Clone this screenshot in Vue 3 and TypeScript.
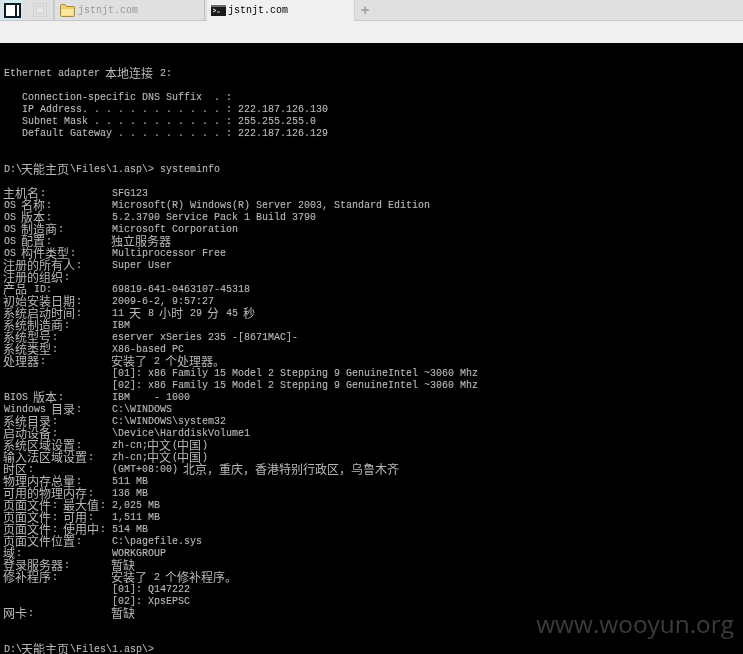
<script setup lang="ts">
interface Run { text: string; cjk: boolean }
interface Line { label: string; value: string }

const rows: Line[] = [
  { label: '', value: '' },
  { label: '', value: '' },
  { label: 'Ethernet adapter 本地连接 2:', value: '' },
  { label: '', value: '' },
  { label: '   Connection-specific DNS Suffix  . :', value: '' },
  { label: '   IP Address. . . . . . . . . . . . : 222.187.126.130', value: '' },
  { label: '   Subnet Mask . . . . . . . . . . . : 255.255.255.0', value: '' },
  { label: '   Default Gateway . . . . . . . . . : 222.187.126.129', value: '' },
  { label: '', value: '' },
  { label: '', value: '' },
  { label: 'D:\\天能主页\\Files\\1.asp\\> systeminfo', value: '' },
  { label: '', value: '' },
  { label: '主机名:', value: 'SFG123' },
  { label: 'OS 名称:', value: 'Microsoft(R) Windows(R) Server 2003, Standard Edition' },
  { label: 'OS 版本:', value: '5.2.3790 Service Pack 1 Build 3790' },
  { label: 'OS 制造商:', value: 'Microsoft Corporation' },
  { label: 'OS 配置:', value: '独立服务器' },
  { label: 'OS 构件类型:', value: 'Multiprocessor Free' },
  { label: '注册的所有人:', value: 'Super User' },
  { label: '注册的组织:', value: '' },
  { label: '产品 ID:', value: '69819-641-0463107-45318' },
  { label: '初始安装日期:', value: '2009-6-2, 9:57:27' },
  { label: '系统启动时间:', value: '11 天 8 小时 29 分 45 秒' },
  { label: '系统制造商:', value: 'IBM' },
  { label: '系统型号:', value: 'eserver xSeries 235 -[8671MAC]-' },
  { label: '系统类型:', value: 'X86-based PC' },
  { label: '处理器:', value: '安装了 2 个处理器。' },
  { label: '', value: '[01]: x86 Family 15 Model 2 Stepping 9 GenuineIntel ~3060 Mhz' },
  { label: '', value: '[02]: x86 Family 15 Model 2 Stepping 9 GenuineIntel ~3060 Mhz' },
  { label: 'BIOS 版本:', value: 'IBM    - 1000' },
  { label: 'Windows 目录:', value: 'C:\\WINDOWS' },
  { label: '系统目录:', value: 'C:\\WINDOWS\\system32' },
  { label: '启动设备:', value: '\\Device\\HarddiskVolume1' },
  { label: '系统区域设置:', value: 'zh-cn;中文(中国)' },
  { label: '输入法区域设置:', value: 'zh-cn;中文(中国)' },
  { label: '时区:', value: '(GMT+08:00) 北京，重庆，香港特别行政区，乌鲁木齐' },
  { label: '物理内存总量:', value: '511 MB' },
  { label: '可用的物理内存:', value: '136 MB' },
  { label: '页面文件: 最大值:', value: '2,025 MB' },
  { label: '页面文件: 可用:', value: '1,511 MB' },
  { label: '页面文件: 使用中:', value: '514 MB' },
  { label: '页面文件位置:', value: 'C:\\pagefile.sys' },
  { label: '域:', value: 'WORKGROUP' },
  { label: '登录服务器:', value: '暂缺' },
  { label: '修补程序:', value: '安装了 2 个修补程序。' },
  { label: '', value: '[01]: Q147222' },
  { label: '', value: '[02]: XpsEPSC' },
  { label: '网卡:', value: '暂缺' },
  { label: '', value: '' },
  { label: '', value: '' },
  { label: 'D:\\天能主页\\Files\\1.asp\\>', value: '' },
]

function runs(s: string): Run[] {
  const out: Run[] = []
  for (const part of s.split(/([\u3000-\u9fff\uff00-\uffef]+)/)) {
    if (part) out.push({ text: part, cjk: /[\u3000-\u9fff\uff00-\uffef]/.test(part) })
  }
  return out
}
</script>

<template>
  <div class="window">
    <div class="tabbar">
      <div class="pane-btn"><span class="pane-icon"></span></div>
      <div class="grid-btn">
        <svg width="14" height="14" viewBox="0 0 14 14"><rect x="0.5" y="0.5" width="13" height="13" fill="none" stroke="#c8c8c8" stroke-dasharray="2 1"/><rect x="3.5" y="3.5" width="7" height="7" fill="#e6e6e6" stroke="#d2d2d2"/></svg>
      </div>
      <div class="tab idle">
        <svg width="15" height="14" viewBox="0 0 15 14"><path d="M1.5 13.5Q0.5 13.5 0.5 12.5V2.5Q0.5 1.5 1.5 1.5H5L6.5 3.5H13.5Q14.5 3.5 14.5 4.5V12.5Q14.5 13.5 13.5 13.5Z" fill="#f2cf62" stroke="#a88a3c"/><path d="M1.5 6H13.5V12.5H1.5Z" fill="#fae8a0"/></svg>
        <span class="tab-label">jstnjt.com</span>
      </div>
      <div class="tab active">
        <svg width="15" height="11" viewBox="0 0 15 11"><rect width="15" height="11" fill="#1a1a1a"/><rect width="15" height="2" fill="#6a6e72"/><path d="M2 4L5 5.5L2 7" fill="none" stroke="#e0e0e0"/><path d="M6 7H9" stroke="#c0c0c0"/></svg>
        <span class="tab-label">jstnjt.com</span>
      </div>
      <div class="plus">+</div>
    </div>
    <div class="toolbar"></div>
    <div class="console">
      <div v-for="(row, i) in rows" :key="i" class="row">
        <span class="label" :class="{ wide: !row.value }"><template v-for="(r, j) in runs(row.label)" :key="j"><span :class="r.cjk ? 'cjk' : 'latin'">{{ r.text }}</span></template></span>
        <span v-if="row.value" class="value"><template v-for="(r, j) in runs(row.value)" :key="j"><span :class="r.cjk ? 'cjk' : 'latin'">{{ r.text }}</span></template></span>
      </div>
      <div class="watermark">www.wooyun.org</div>
    </div>
  </div>
</template>

<style>
html, body { background: #000; overflow: hidden; }
</style>

<style scoped>
.window { width: 743px; height: 654px; overflow: hidden; display: flex; flex-direction: column; font-family: "Liberation Mono", monospace; }
.tabbar { height: 21px; box-sizing: border-box; display: flex; align-items: stretch; background: #e0e0e0; border-bottom: 1px solid #c8c8c8; flex: none; }
.pane-btn { width: 25px; display: flex; align-items: center; justify-content: center; background: linear-gradient(90deg, #e0e0e0, #cfeaf2 15%, #cfeaf2 85%, #e0e0e0); }
.pane-icon { width: 17px; height: 15px; box-sizing: border-box; border: 2px solid #101820; background: linear-gradient(90deg, #fff 0 9px, #101820 9px 11px, #fff 11px); }
.grid-btn { width: 29px; box-sizing: border-box; display: flex; align-items: center; justify-content: center; border-left: 1px solid #d8d8d8; border-right: 1px solid #c8c8c8; }
.tab { display: flex; align-items: center; font-size: 10px; box-sizing: border-box; will-change: transform; }
.tab.idle { width: 151px; padding-left: 5px; gap: 3px; border-left: 1px solid #cfcfcf; border-right: 1px solid #bdbdbd; color: #989898; }
.tab.active { width: 148px; padding-left: 4px; margin: 0 0 -1px 2px; gap: 2px; background: #f0f0f0; color: #000; height: 21px; border-right: 1px solid #d0d0d0; }
.tab-label { white-space: pre; }
.plus { width: 20px; text-align: center; color: #9aa4aa; font: 700 14px/20px "Liberation Sans", sans-serif; }
.toolbar { height: 22px; background: #f0f0f0; flex: none; }
.console { position: relative; flex: 1; min-height: 0; background: #000; color: #b8b8b8; font: 12px "Noto Sans CJK SC", sans-serif; padding-left: 4px; will-change: transform; }
.row { height: 12px; line-height: 10px; display: flex; white-space: pre; }
.label { flex: 0 0 108px; }
.label.wide { flex: 1; }
.latin { font-family: "Liberation Mono", monospace; font-size: 10px; vertical-align: 1px; text-shadow: 0 0 1px rgba(184, 184, 184, 0.35); }
.cjk { font-size: 12px; margin-left: -1px; margin-right: 1px; vertical-align: -1px; }
.watermark { position: absolute; right: 9px; bottom: 15px; font: 400 24.4px/30px "Open Sans", sans-serif; color: #3c3c3c; }
</style>
